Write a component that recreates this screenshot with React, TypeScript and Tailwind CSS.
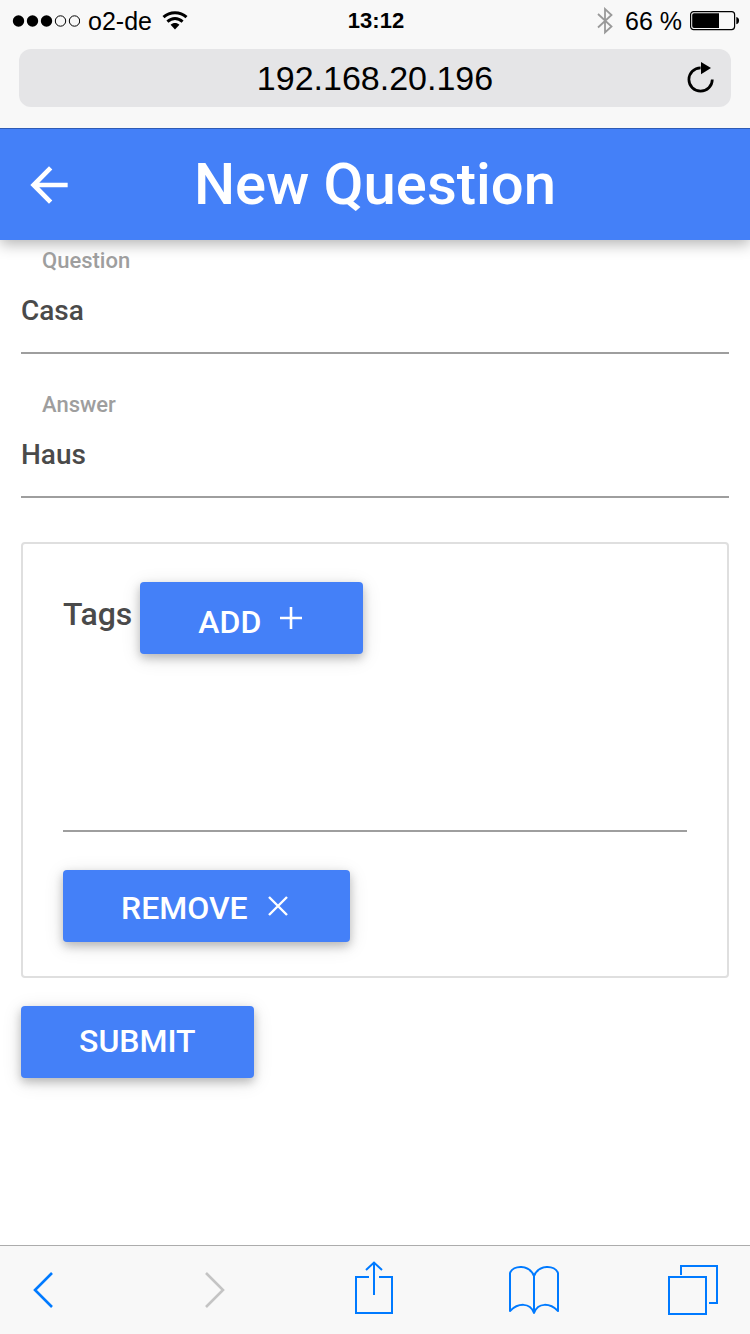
import { useState } from "react";
import type { ReactNode } from "react";

function StatusBar() {
  return (
    <div className="grid h-10 grid-cols-3 items-center pt-0.5 pr-2.5 pl-3 text-[25px] leading-8 text-black">
      <div className="flex items-center gap-2">
        <svg width="68" height="12" viewBox="0 0 68 12" aria-hidden="true">
          <circle cx="6.5" cy="6" r="5.7" />
          <circle cx="20.5" cy="6" r="5.7" />
          <circle cx="34.5" cy="6" r="5.7" />
          <circle cx="48.5" cy="6" r="5.2" fill="none" stroke="black" />
          <circle cx="62.5" cy="6" r="5.2" fill="none" stroke="black" />
        </svg>
        <span>o2-de</span>
        <svg className="ml-0.5" width="26" height="20" viewBox="0 0 26 20" aria-hidden="true">
          <path d="M1.500 6.200C8 .3 18 .3 24.500 6.200" fill="none" stroke="black" strokeWidth="3" />
          <path d="M5.400 10.600C10 6.400 16 6.400 20.600 10.600" fill="none" stroke="black" strokeWidth="2.900" />
          <path d="M8.600 13.800C11 11.500 15 11.500 17.400 13.800L13 18.400Z" />
        </svg>
      </div>
      <span className="text-center text-[22px] font-bold">13:12</span>
      <div className="flex items-center justify-end gap-2">
        <svg className="mr-1" width="16" height="28" viewBox="0 0 16 28" fill="none" stroke="#999999" strokeWidth="1.8" aria-hidden="true">
          <path d="M1 7L14.5 19.5L8 25.5V2L14.5 8L1 20.5" />
        </svg>
        <span className="whitespace-nowrap">66 %</span>
        <svg width="50" height="20" viewBox="0 0 50 20" aria-hidden="true">
          <rect x=".6" y=".6" width="44" height="18" rx="3" fill="none" stroke="black" strokeWidth="1.2" />
          <path d="M4 2.200H29V17H4Q2.200 17 2.200 15V4Q2.200 2.200 4 2.200Z" />
          <path d="M46.300 6C50 6.500 50 12.700 46.300 13.200Z" />
        </svg>
      </div>
    </div>
  );
}

function AddressBar() {
  return (
    <div className="mx-[19px] mt-[9px] mb-[21px] grid h-[58px] grid-cols-[1fr_auto_1fr] items-center rounded-xl bg-[#e5e5e7] px-4 text-black">
      <span className="col-start-2 text-[34px] leading-10">192.168.20.196</span>
      <button type="button" aria-label="Reload" className="justify-self-end">
        <svg width="28" height="32" viewBox="0 0 28 32" aria-hidden="true">
          <path d="M25.300 17.500A11.700 11.700 0 1 1 13.600 5.800" fill="none" stroke="black" strokeWidth="2.700" />
          <path d="M14 0L24 6L14 12.200Z" />
        </svg>
      </button>
    </div>
  );
}

function Field({ id, label, value }: { id: string; label: string; value: string }) {
  return (
    <div className="flex h-36 flex-col">
      <label htmlFor={id} className="px-[21px] pt-[7px] pb-px text-[22px] leading-7 text-[#9e9e9e]">
        {label}
      </label>
      <input
        id={id}
        type="text"
        defaultValue={value}
        className="h-[78px] w-full border-b-2 border-[#9e9e9e] bg-transparent pb-2 text-[28px] text-[#4a4a4a] outline-none"
      />
    </div>
  );
}

function RaisedButton({ children, type = "button", onClick }: { children: ReactNode; type?: "button" | "submit"; onClick?: () => void }) {
  return (
    <button
      type={type}
      onClick={onClick}
      className="flex h-18 items-center gap-4 rounded-sm bg-[#4480f8] px-[58px] text-[32px] leading-10 text-white uppercase shadow-[0_4px_10px_rgba(0,0,0,0.22),0_4px_20px_rgba(0,0,0,0.12)]"
    >
      {children}
    </button>
  );
}

function Toolbar() {
  return (
    <nav className="sticky bottom-0 flex h-[89px] items-center justify-between border-t border-[#acacac] bg-[#f8f8f8] px-8 text-[#007aff]">
      <button type="button" aria-label="Back" className="w-12">
        <svg width="22" height="38" viewBox="0 0 22 38" fill="none" stroke="currentColor" strokeWidth="2.600">
          <path d="M20 2L3 19L20 36" />
        </svg>
      </button>
      <button type="button" aria-label="Forward" disabled className="flex w-[50px] justify-center text-[#c4c4c4]">
        <svg width="22" height="38" viewBox="0 0 22 38" fill="none" stroke="currentColor" strokeWidth="2.600">
          <path d="M2 2L19 19L2 36" />
        </svg>
      </button>
      <button type="button" aria-label="Share" className="flex w-[50px] justify-center">
        <svg width="38" height="58" viewBox="0 0 38 58" fill="none" stroke="currentColor" strokeWidth="2">
          <path d="M14 16H1V52H37V16H24M19 34V2M11 9L19 1.500L27 9" />
        </svg>
      </button>
      <button type="button" aria-label="Bookmarks" className="w-[50px]">
        <svg width="50" height="50" viewBox="0 0 50 50" fill="none" stroke="currentColor" strokeWidth="2" strokeLinejoin="round">
          <path d="M25 11C20-1 4 0 1 8V46C9 38 21 37 25 48C29 37 41 38 49 46V8C46 0 30-1 25 11V48" />
        </svg>
      </button>
      <button type="button" aria-label="Tabs" className="w-[50px]">
        <svg width="50" height="50" viewBox="0 0 50 50" fill="none" stroke="currentColor" strokeWidth="2">
          <path d="M1 12H38V49H1ZM13 10V1H49V38H41" />
        </svg>
      </button>
    </nav>
  );
}

export default function App() {
  const [tags, setTags] = useState<number[]>([0]);

  return (
    <div className="flex min-h-screen flex-col bg-white font-['Roboto',sans-serif] font-medium">
      <div className="relative z-10 bg-[#f8f8f8] font-['Liberation_Sans',sans-serif] font-normal">
        <StatusBar />
        <AddressBar />
      </div>
      <header className="grid h-28 grid-cols-[56px_1fr_56px] items-center border-t border-[#2f5bb5] bg-[#4480f8] px-[21px] text-white shadow-[0_4px_14px_rgba(0,0,0,0.3)]">
        <button type="button" aria-label="Go back">
          <svg width="56" height="56" viewBox="0 0 24 24" fill="currentColor">
            <path d="M20 11H7.830l5.590-5.590L12 4l-8 8 8 8 1.410-1.410L7.830 13H20v-2z" />
          </svg>
        </button>
        <h1 className="pb-0.5 text-center text-[58px] leading-[64px]">New Question</h1>
      </header>
      <form className="flex-1 px-[21px] pb-10" onSubmit={(event) => event.preventDefault()}>
        <Field id="question" label="Question" value="Casa" />
        <Field id="answer" label="Answer" value="Haus" />
        <section className="mt-[14px] rounded-sm border-2 border-[#dfdfdf] px-10 pt-[38px] pb-[34px]">
          <div className="flex items-start gap-2">
            <h2 className="pt-3 text-[32px] leading-10 text-[#4a4a4a]">Tags</h2>
            <RaisedButton onClick={() => setTags([...tags, tags.length ? Math.max(...tags) + 1 : 0])}>
              <span className="pt-2">Add</span>
              <svg width="28" height="24" viewBox="-2 0 28 24" fill="none" stroke="currentColor" strokeWidth="2.600" aria-hidden="true">
                <path d="M12 1V23M1 12H23" />
              </svg>
            </RaisedButton>
          </div>
          {tags.map((tag) => (
            <div key={tag} className="pt-[100px]">
              <input
                type="text"
                aria-label="Tag"
                className="mb-[38px] block h-[78px] w-full border-b-2 border-[#9e9e9e] bg-transparent pb-2 text-[28px] text-[#4a4a4a] outline-none"
              />
              <RaisedButton onClick={() => setTags(tags.filter((item) => item !== tag))}>
                <span className="pt-1">Remove</span>
                <svg width="28" height="20" viewBox="-4 0 28 20" fill="none" stroke="currentColor" strokeWidth="2.400" aria-hidden="true">
                  <path d="M1 1L19 19M19 1L1 19" />
                </svg>
              </RaisedButton>
            </div>
          ))}
        </section>
        <div className="mt-7">
          <RaisedButton type="submit">
            <span className="pb-0.5">Submit</span>
          </RaisedButton>
        </div>
      </form>
      <Toolbar />
    </div>
  );
}
